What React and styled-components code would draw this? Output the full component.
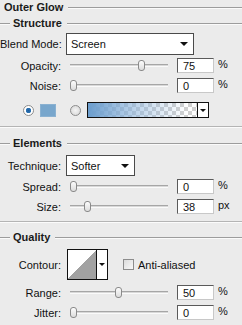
import styled, { createGlobalStyle } from 'styled-components';

const GlobalStyle = createGlobalStyle`
    html, body {
        margin: 0;
        padding: 0;
        background: #ebebeb;
    }
    body {
        font-family: "Liberation Sans", Arial, sans-serif;
        font-size: 11px;
        color: #111;
    }
`;

const Panel = styled.div`
    width: 242px;
    height: 325px;
    display: flex;
    flex-direction: column;
    background: #ebebeb;
    overflow: hidden;
`;

const Title = styled.div`
    display: flex;
    align-items: center;
    height: 14px;
    margin-top: ${(p) => p.$top || 0}px;
    font-weight: bold;
    font-size: 11px;
    color: #1a1a1a;
    padding-left: ${(p) => (p.$main ? 4 : 0)}px;

    &::before {
        content: '';
        display: ${(p) => (p.$main ? 'none' : 'block')};
        width: 10px;
        height: 1px;
        background: #9c9c9c;
        box-shadow: 0 1px 0 #fafafa;
        margin-right: 3px;
    }
    &::after {
        content: '';
        flex: 1;
        height: 1px;
        background: #9c9c9c;
        box-shadow: 0 1px 0 #fafafa;
        margin-left: 5px;
    }
`;

const Separator = styled.div`
    height: 1px;
    margin-top: ${(p) => p.$top || 0}px;
    background: #b4b4b4;
    border-bottom: 1px solid #fbfbfb;
`;

const Row = styled.div`
    display: flex;
    align-items: center;
    height: ${(p) => p.$h || 15}px;
    margin-top: ${(p) => p.$top || 0}px;
    padding-left: ${(p) => p.$indent || 0}px;
`;

const Label = styled.div`
    width: 61px;
    text-align: right;
    flex-shrink: 0;
    margin-right: 5px;
    white-space: nowrap;
`;

const Select = styled.div`
    box-sizing: border-box;
    width: ${(p) => p.$w}px;
    height: 100%;
    background: #fff;
    border: 1px solid #4a4a4a;
    display: flex;
    align-items: center;
    justify-content: space-between;
    padding: 0 5px 0 4px;
    font-size: 11px;
`;

const Arrow = styled.span`
    width: 0;
    height: 0;
    border-left: 4px solid transparent;
    border-right: 4px solid transparent;
    border-top: 4px solid #111;
`;

const SmallArrow = styled.span`
    width: 0;
    height: 0;
    border-left: 3px solid transparent;
    border-right: 3px solid transparent;
    border-top: 3px solid #111;
`;

const Track = styled.div`
    position: relative;
    width: 98px;
    height: 3px;
    margin-left: 4px;
    background: #d8d8d8;
    border-top: 1px solid #a6a6a6;
    border-bottom: 1px solid #fafafa;
    box-sizing: border-box;
`;

const Thumb = styled.div`
    position: absolute;
    top: -5px;
    width: 7px;
    height: 11px;
    margin-left: -3px;
    box-sizing: border-box;
    border: 1px solid #8a8a8a;
    border-radius: 3px;
    background: linear-gradient(#fdfdfd, #dcdcdc);
`;

const NumberBox = styled.div`
    box-sizing: border-box;
    width: 37px;
    height: 100%;
    margin-left: 9px;
    background: #fff;
    border: 1px solid #5a5a5a;
    border-right-color: #c8c8c8;
    border-bottom-color: #c8c8c8;
    padding-left: 5px;
    display: flex;
    align-items: center;
    font-size: 11px;
`;

const Unit = styled.span`
    margin-left: 4px;
    font-size: 11px;
    align-self: flex-start;
`;

const Radio = styled.span`
    box-sizing: border-box;
    width: 11px;
    height: 11px;
    margin-left: ${(p) => p.$gap || 0}px;
    border-radius: 50%;
    border: 1px solid #8c8c8c;
    background: ${(p) =>
        p.$on
            ? 'radial-gradient(circle, #1c5c9c 0, #2f75b5 2.5px, #fff 3px)'
            : 'radial-gradient(circle, #f4f4f4 0, #d4d4d4 100%)'};
    flex-shrink: 0;
`;

const Swatch = styled.span`
    width: 16px;
    height: 13px;
    margin-left: 6px;
    background: #78a6cc;
    box-shadow: inset 0 0 0 1px #8ab1d1;
`;

const GradientBox = styled.div`
    box-sizing: border-box;
    width: 122px;
    height: 16px;
    margin-left: 6px;
    border: 1px solid #111;
    display: flex;
    background: #fff;
`;

const GradientFill = styled.div`
    flex: 1;
    background:
        linear-gradient(to right, rgba(108, 158, 206, 1), rgba(140, 180, 220, 0.55) 45%, rgba(255, 255, 255, 0) 90%),
        repeating-conic-gradient(#d0d0d0 0 25%, #fff 0 50%) 0 0 / 8px 8px;
`;

const GradientButton = styled.div`
    width: 10px;
    border-left: 1px solid #111;
    display: flex;
    align-items: center;
    justify-content: center;
    background: #fff;
`;

const ContourBox = styled.div`
    box-sizing: border-box;
    width: 41px;
    height: 31px;
    border: 1px solid #111;
    display: flex;
    background: #fff;
    margin-left: 1px;
`;

const ContourPreview = styled.div`
    flex: 1;
    background: linear-gradient(to top left, #a2a2a2 50%, #fff 50%);
`;

const ContourButton = styled.div`
    width: 10px;
    border-left: 1px solid #111;
    display: flex;
    align-items: center;
    justify-content: center;
`;

const Check = styled.span`
    box-sizing: border-box;
    width: 11px;
    height: 11px;
    margin-left: 15px;
    border: 1px solid #8c8c8c;
    background: linear-gradient(135deg, #dcdcdc, #f8f8f8);
`;

const CheckLabel = styled.span`
    margin-left: 4px;
`;

function Slider({ label, value, max = 100, unit = '%', top }) {
    const pos = 3 + (value / max) * 90;
    return (
        <Row $top={top}>
            <Label>{label}</Label>
            <Track>
                <Thumb style={{ left: `${pos}px` }} />
            </Track>
            <NumberBox>{value}</NumberBox>
            <Unit>{unit}</Unit>
        </Row>
    );
}

export default function App() {
    return (
        <Panel>
            <GlobalStyle />
            <Title $main>Outer Glow</Title>
            <Title $top={2}>Structure</Title>

            <Row $h={22} $top={3}>
                <Label>Blend Mode:</Label>
                <Select $w={128}>
                    Screen
                    <Arrow />
                </Select>
            </Row>
            <Slider label="Opacity:" value={75} top={3} />
            <Slider label="Noise:" value={0} top={5} />

            <Row $h={16} $top={9} $indent={23}>
                <Radio $on />
                <Swatch />
                <Radio $gap={14} />
                <GradientBox>
                    <GradientFill />
                    <GradientButton>
                        <SmallArrow />
                    </GradientButton>
                </GradientBox>
            </Row>

            <Separator $top={8} />
            <Title $top={8}>Elements</Title>
            <Row $h={21} $top={5}>
                <Label>Technique:</Label>
                <Select $w={69}>
                    Softer
                    <Arrow />
                </Select>
            </Row>
            <Slider label="Spread:" value={0} top={3} />
            <Slider label="Size:" value={38} max={250} unit="px" top={5} />

            <Separator $top={7} />
            <Title $top={7}>Quality</Title>
            <Row $h={31} $top={5}>
                <Label>Contour:</Label>
                <ContourBox>
                    <ContourPreview />
                    <ContourButton>
                        <SmallArrow />
                    </ContourButton>
                </ContourBox>
                <Check />
                <CheckLabel>Anti-aliased</CheckLabel>
            </Row>
            <Slider label="Range:" value={50} top={5} />
            <Slider label="Jitter:" value={0} top={5} />
        </Panel>
    );
}
